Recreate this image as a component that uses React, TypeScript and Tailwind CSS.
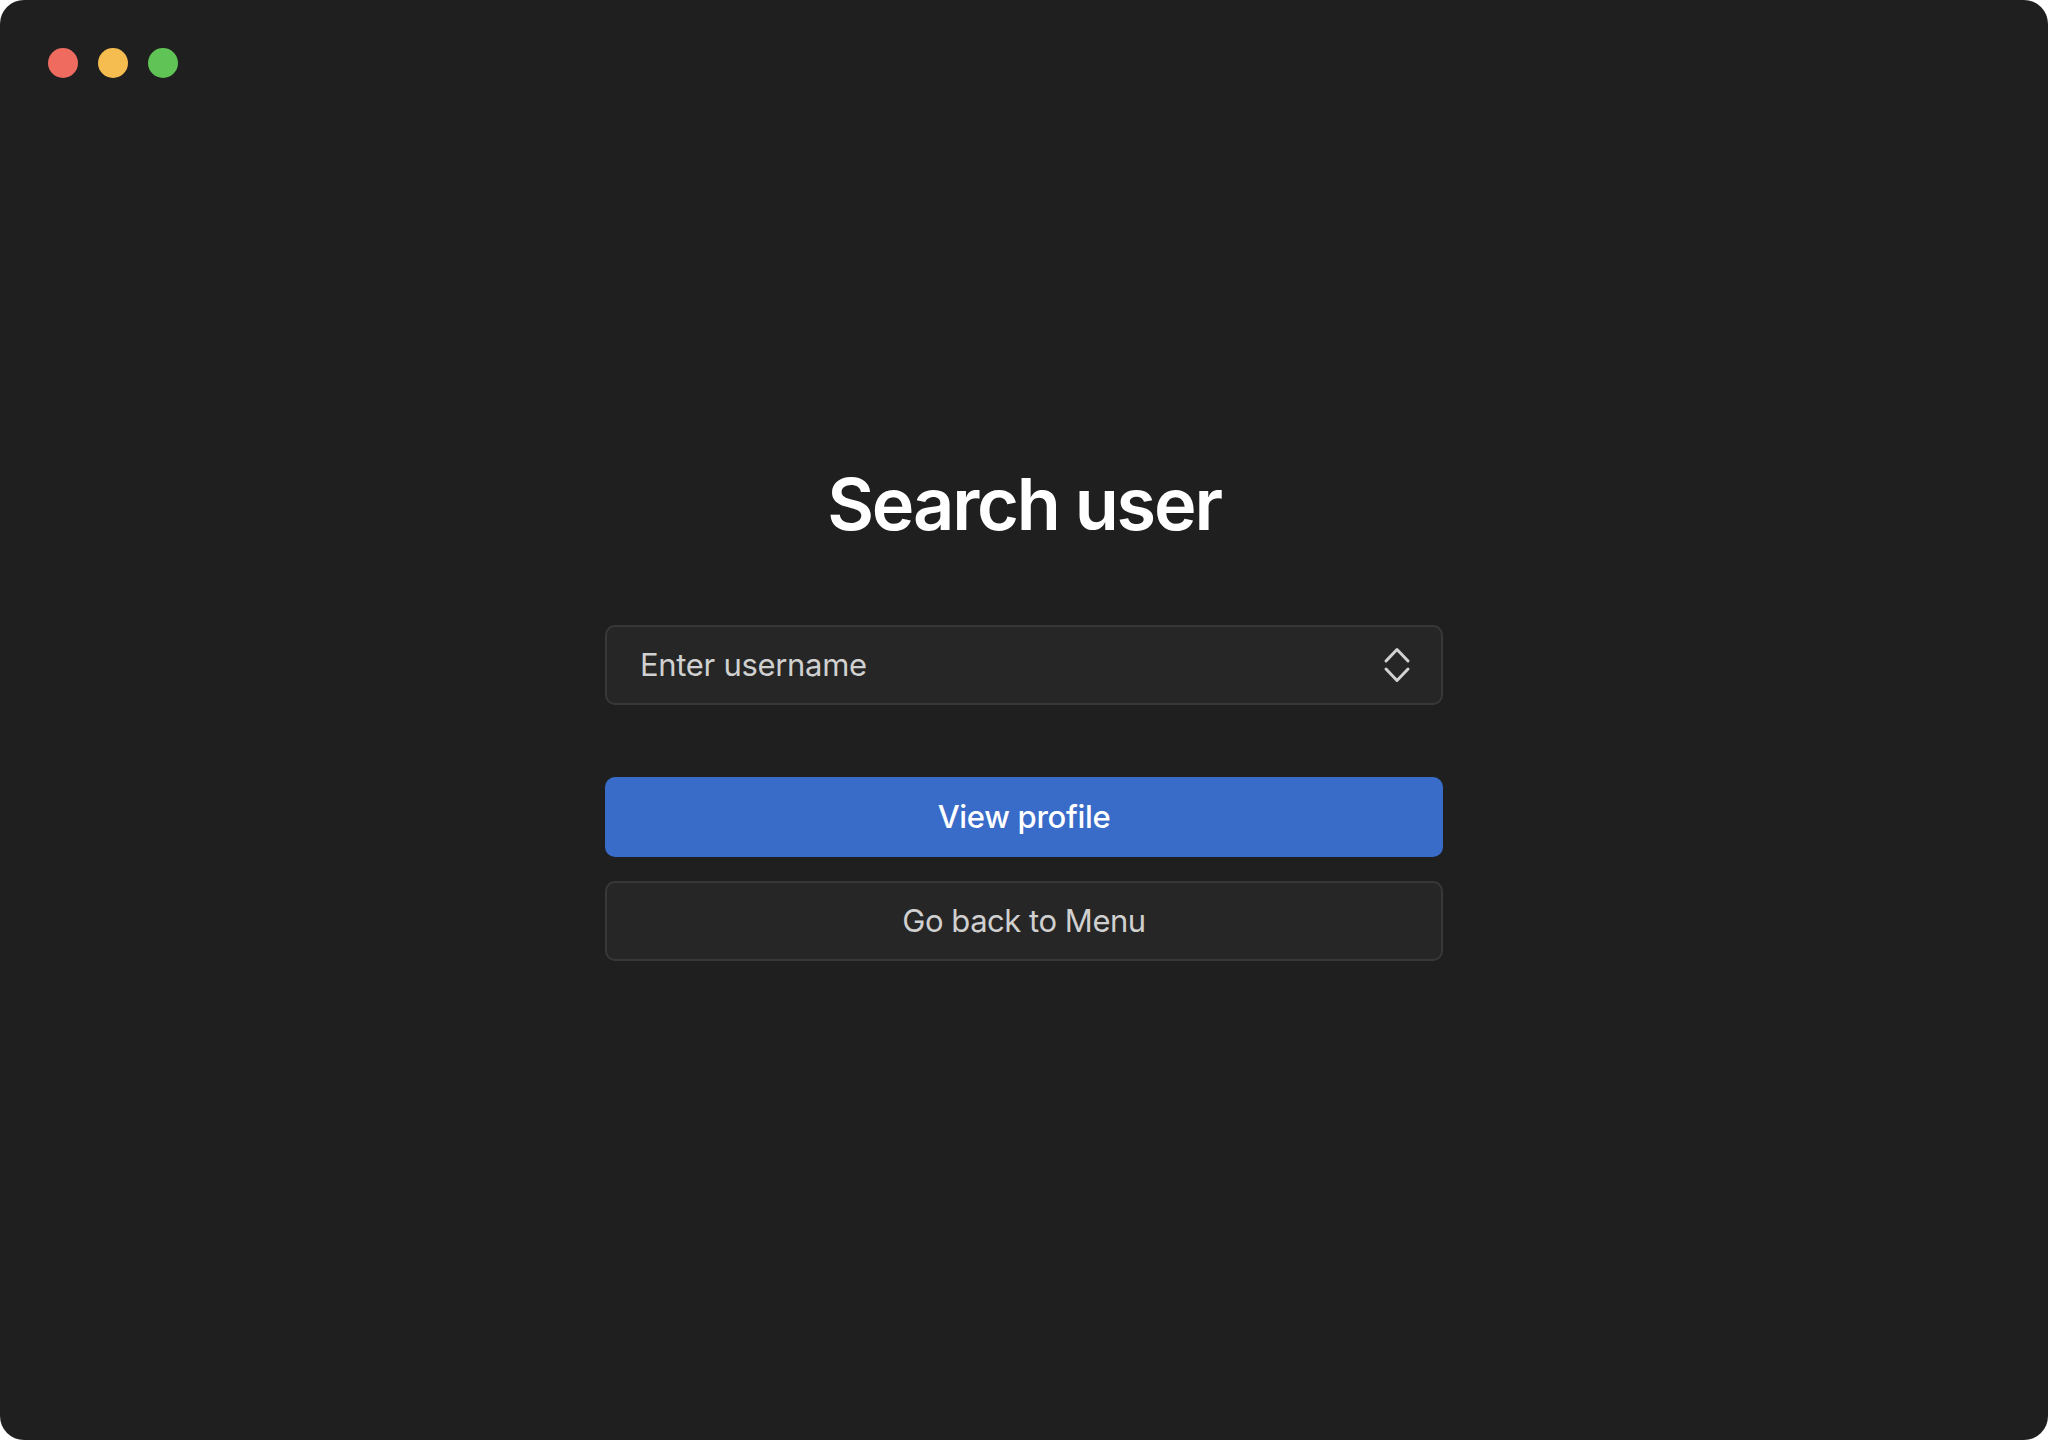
import { useState } from "react";

function StepperIcon() {
  return (
    <svg width="30" height="38" viewBox="0 0 30 38" fill="none" stroke="#d2d2d2" strokeWidth="3" strokeLinecap="round" strokeLinejoin="round">
      <path d="M4 15 L15 3.5 L26 15" />
      <path d="M4 23 L15 34.5 L26 23" />
    </svg>
  );
}

export default function App() {
  const [username, setUsername] = useState("");

  return (
    <div className="h-screen w-screen bg-white" style={{ fontFamily: "Inter, 'Liberation Sans', sans-serif" }}>
      <div className="flex h-full w-full flex-col rounded-[24px] bg-[#1f1f1f]">
        {/* window controls */}
        <div className="flex items-center gap-5 pl-[48px] pt-[48px]">
          <span className="size-[30px] rounded-full bg-[#ef6b60]" />
          <span className="size-[30px] rounded-full bg-[#f5bd4f]" />
          <span className="size-[30px] rounded-full bg-[#5fc455]" />
        </div>

        <main className="mx-auto mt-[390px] flex w-[838px] flex-col items-center">
          <h1 className="text-[72px] font-semibold leading-[72px] tracking-[-0.03em] text-white">Search user</h1>

          <div className="mt-[85px] flex h-[80px] w-full items-center rounded-[10px] border-2 border-[#383838] bg-[#262626] pl-[33px] pr-[29px]">
            <input
              value={username}
              onChange={(e) => setUsername(e.target.value)}
              placeholder="Enter username"
              className="flex-1 bg-transparent text-[31px] tracking-[-0.01em] text-[#d4d4d4] outline-none placeholder:text-[#d0d0d0]"
            />
            <StepperIcon />
          </div>

          <button className="mt-[72px] flex h-[80px] w-full items-center justify-center rounded-[10px] bg-[#396bc9] text-[31px] font-medium tracking-[-0.01em] text-white">
            View profile
          </button>
          <button className="mt-[24px] flex h-[80px] w-full items-center justify-center rounded-[10px] border-2 border-[#383838] bg-[#262626] text-[31px] tracking-[-0.015em] text-[#d0d0d0]">
            Go back to Menu
          </button>
        </main>
      </div>
    </div>
  );
}
